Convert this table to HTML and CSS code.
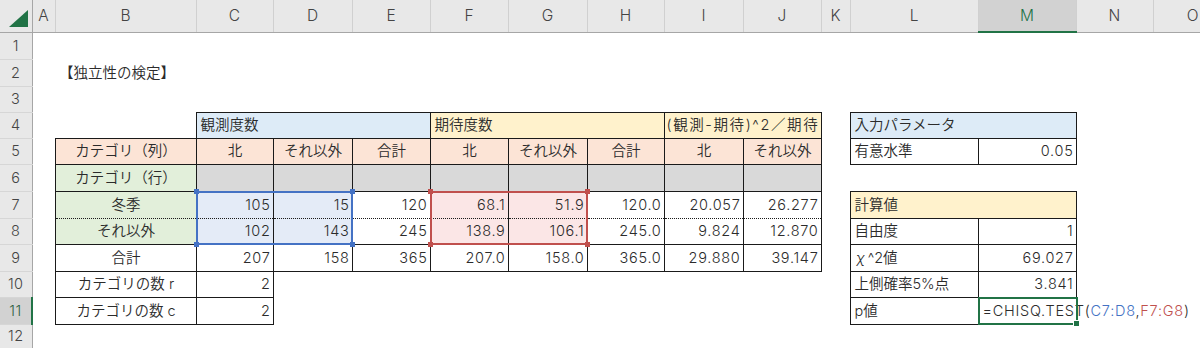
FILE: index.html
```html
<!DOCTYPE html>
<html lang="ja">
<head>
<meta charset="utf-8">
<title>独立性の検定</title>
<link rel="stylesheet" href="styles.css">
</head>
<body>
<table class="sheet">
<colgroup>
<col class="w-rh"><col class="w-a"><col class="w-b"><col class="w-c"><col class="w-d"><col class="w-e"><col class="w-f"><col class="w-g"><col class="w-h"><col class="w-i"><col class="w-j"><col class="w-k"><col class="w-l"><col class="w-m"><col class="w-n"><col class="w-o">
</colgroup>
<tr class="hdr">
<th class="corner"><svg class="tri" width="20" height="18" viewBox="0 0 20 18"><polygon points="19,0 19,17 0,17" fill="#217346"/></svg></th>
<th class="ch">A</th><th class="ch">B</th><th class="ch">C</th><th class="ch">D</th><th class="ch">E</th><th class="ch">F</th><th class="ch">G</th><th class="ch">H</th><th class="ch">I</th><th class="ch">J</th><th class="ch">K</th><th class="ch">L</th><th class="ch sel">M</th><th class="ch">N</th><th class="ch">O</th>
</tr>
<tr class="h27"><th class="rh">1</th><td></td><td></td><td></td><td></td><td></td><td></td><td></td><td></td><td></td><td></td><td></td><td></td><td></td><td></td><td></td></tr>
<tr class="h27"><th class="rh">2</th><td></td><td class="l">【独立性の検定】</td><td></td><td></td><td></td><td></td><td></td><td></td><td></td><td></td><td></td><td></td><td></td><td></td><td></td></tr>
<tr class="h26"><th class="rh">3</th><td></td><td></td><td></td><td></td><td></td><td></td><td></td><td></td><td></td><td></td><td></td><td></td><td></td><td></td><td></td></tr>
<tr class="h26"><th class="rh">4</th><td></td><td></td>
<td class="b l blue" colspan="3">観測度数</td>
<td class="b l yellow" colspan="3">期待度数</td>
<td class="b l yellow tight" colspan="2">(観測-期待)^2／期待</td>
<td></td>
<td class="b l blue" colspan="2">入力パラメータ</td>
<td></td><td></td></tr>
<tr class="h26"><th class="rh">5</th><td></td>
<td class="b c peach">カテゴリ（列）</td>
<td class="b c peach">北</td><td class="b c peach">それ以外</td><td class="b c peach">合計</td>
<td class="b c peach">北</td><td class="b c peach">それ以外</td><td class="b c peach">合計</td>
<td class="b c peach">北</td><td class="b c peach">それ以外</td>
<td></td>
<td class="b l">有意水準</td><td class="b r">0.05</td>
<td></td><td></td></tr>
<tr class="h27"><th class="rh">6</th><td></td>
<td class="b c green">カテゴリ（行）</td>
<td class="b gray"></td><td class="b gray"></td><td class="b gray"></td><td class="b gray"></td><td class="b gray"></td><td class="b gray"></td><td class="b gray"></td><td class="b gray"></td>
<td></td><td></td><td></td><td></td><td></td></tr>
<tr class="h27"><th class="rh">7</th><td></td>
<td class="b c green dotb">冬季</td>
<td class="b r selblue dotb anchor">105<span class="rng rng-blue"><i class="hd tl"></i><i class="hd tr"></i><i class="hd bl"></i><i class="hd br"></i></span></td>
<td class="b r selblue dotb">15</td>
<td class="b r dotb">120</td>
<td class="b r selred dotb anchor">68.1<span class="rng rng-red"><i class="hd tl"></i><i class="hd tr"></i><i class="hd bl"></i><i class="hd br"></i></span></td>
<td class="b r selred dotb">51.9</td>
<td class="b r dotb">120.0</td>
<td class="b r dotb">20.057</td>
<td class="b r dotb">26.277</td>
<td></td>
<td class="b l yellow" colspan="2">計算値</td>
<td></td><td></td></tr>
<tr class="h26"><th class="rh">8</th><td></td>
<td class="b c green dott">それ以外</td>
<td class="b r selblue dott">102</td>
<td class="b r selblue dott">143</td>
<td class="b r dott">245</td>
<td class="b r selred dott">138.9</td>
<td class="b r selred dott">106.1</td>
<td class="b r dott">245.0</td>
<td class="b r dott">9.824</td>
<td class="b r dott">12.870</td>
<td></td>
<td class="b l">自由度</td><td class="b r">1</td>
<td></td><td></td></tr>
<tr class="h27"><th class="rh">9</th><td></td>
<td class="b c">合計</td>
<td class="b r">207</td><td class="b r">158</td><td class="b r">365</td>
<td class="b r">207.0</td><td class="b r">158.0</td><td class="b r">365.0</td>
<td class="b r">29.880</td><td class="b r">39.147</td>
<td></td>
<td class="b l"><span class="chi">χ</span>^2値</td><td class="b r">69.027</td>
<td></td><td></td></tr>
<tr class="h26"><th class="rh">10</th><td></td>
<td class="b c">カテゴリの数 r</td><td class="b r">2</td>
<td></td><td></td><td></td><td></td><td></td><td></td><td></td><td></td>
<td class="b l">上側確率5%点</td><td class="b r">3.841</td>
<td></td><td></td></tr>
<tr class="h27"><th class="rh rsel">11</th><td></td>
<td class="b c">カテゴリの数 c</td><td class="b r">2</td>
<td></td><td></td><td></td><td></td><td></td><td></td><td></td><td></td>
<td class="b l">p値</td>
<td class="b l active anchor">=CHISQ.TEST(<span class="ref-blue">C7:D8</span>,<span class="ref-red">F7:G8</span>)<span class="act"><i class="fill"></i></span></td>
<td></td><td></td></tr>
<tr class="h24"><th class="rh">12</th><td></td><td></td><td></td><td></td><td></td><td></td><td></td><td></td><td></td><td></td><td></td><td></td><td></td><td></td><td></td></tr>
</table>
</body>
</html>
```
FILE: styles.css
```css
html, body {
  margin: 0;
  padding: 0;
  background: #fff;
  overflow: hidden;
}
body {
  width: 1200px;
  height: 348px;
  font-family: Inter, "Noto Sans CJK JP", sans-serif;
  font-size: 14.5px;
  font-weight: 350;
  color: #2b2b2b;
}
.sheet {
  border-collapse: collapse;
  table-layout: fixed;
  width: 1232px;
}
.w-rh { width: 32px; }
.w-a { width: 23px; }
.w-b { width: 141px; }
.w-c { width: 77px; }
.w-d { width: 79px; }
.w-e { width: 78px; }
.w-f { width: 78px; }
.w-g { width: 79px; }
.w-h { width: 77px; }
.w-i { width: 79px; }
.w-j { width: 78px; }
.w-k { width: 29px; }
.w-l { width: 128px; }
.w-m { width: 98px; }
.w-n { width: 77px; }
.w-o { width: 79px; }

td, th {
  padding: 0 3px 0 4px;
  white-space: nowrap;
  line-height: 18px;
  font-weight: 350;
}
.hdr { height: 32px; }
.h27 { height: 27px; }
.h26 { height: 26px; }
.h24 { height: 24px; }

.hdr th {
  background: #e8e8e8;
  border-bottom: 1px solid #a6a6a6;
  color: #444;
  font-size: 15.5px;
  padding: 0;
  text-align: center;
}
.ch {
  border-left: 1px solid #d0d0d0;
}
.ch.sel {
  background: #d2d2d2;
  color: #217346;
  border-bottom: 2px solid #217346;
}
.corner {
  border-right: 1px solid #a6a6a6;
  text-align: right;
  vertical-align: bottom;
}
.tri {
  display: block;
  margin: 0 3px 4px auto;
}
.rh {
  background: #e8e8e8;
  border-right: 1px solid #a6a6a6;
  border-bottom: 1px solid #d6d6d6;
  color: #444;
  font-size: 14.5px;
  letter-spacing: 0.5px;
  text-align: center;
  padding: 0;
}
.rh.rsel {
  background: #d2d2d2;
  border-right: 2px solid #217346;
  color: #2d5e3f;
}

.b { border: 1px solid #1a1a1a; }
.dotb { border-bottom: 1px dotted #1a1a1a; }
.dott { border-top: 1px dotted #1a1a1a; }
.l { text-align: left; }
.c { text-align: center; }
.r { text-align: right; letter-spacing: 0.7px; padding-right: 2px; }
.tight { padding: 0 0 0 2px; overflow: hidden; letter-spacing: 1.6px; }

.blue { background: #ddebf7; }
.yellow { background: #fff2cc; }
.peach { background: #fce4d6; }
.green { background: #e2efda; }
.gray { background: #d9d9d9; }
.selblue { background: #e4ebf7; }
.selred { background: #fbe6e6; }

.anchor { position: relative; }
.rng {
  position: absolute;
  left: -1px;
  top: -1px;
  width: 157px;
  height: 54px;
  box-sizing: border-box;
  pointer-events: none;
}
.rng-blue { border: 2px solid #4472c4; }
.rng-red { border: 2px solid #c0504d; width: 158px; }
.hd {
  position: absolute;
  width: 5px;
  height: 5px;
}
.rng-blue .hd { background: #4472c4; }
.rng-red .hd { background: #c0504d; }
.hd.tl { left: -4px; top: -4px; }
.hd.tr { right: -4px; top: -4px; }
.hd.bl { left: -4px; bottom: -4px; }
.hd.br { right: -4px; bottom: -4px; }

.chi { font-style: italic; margin: 0 3px 0 2px; }

.active { overflow: visible; letter-spacing: 0.75px; }
.act {
  position: absolute;
  left: -1px;
  top: -1px;
  width: 100px;
  height: 28px;
  box-sizing: border-box;
  border: 2px solid #217346;
  pointer-events: none;
}
.fill {
  position: absolute;
  right: -4px;
  bottom: -4px;
  width: 5px;
  height: 5px;
  background: #217346;
  border: 1px solid #fff;
}
.ref-blue { color: #4472c4; }
.ref-red { color: #c0504d; }
```
